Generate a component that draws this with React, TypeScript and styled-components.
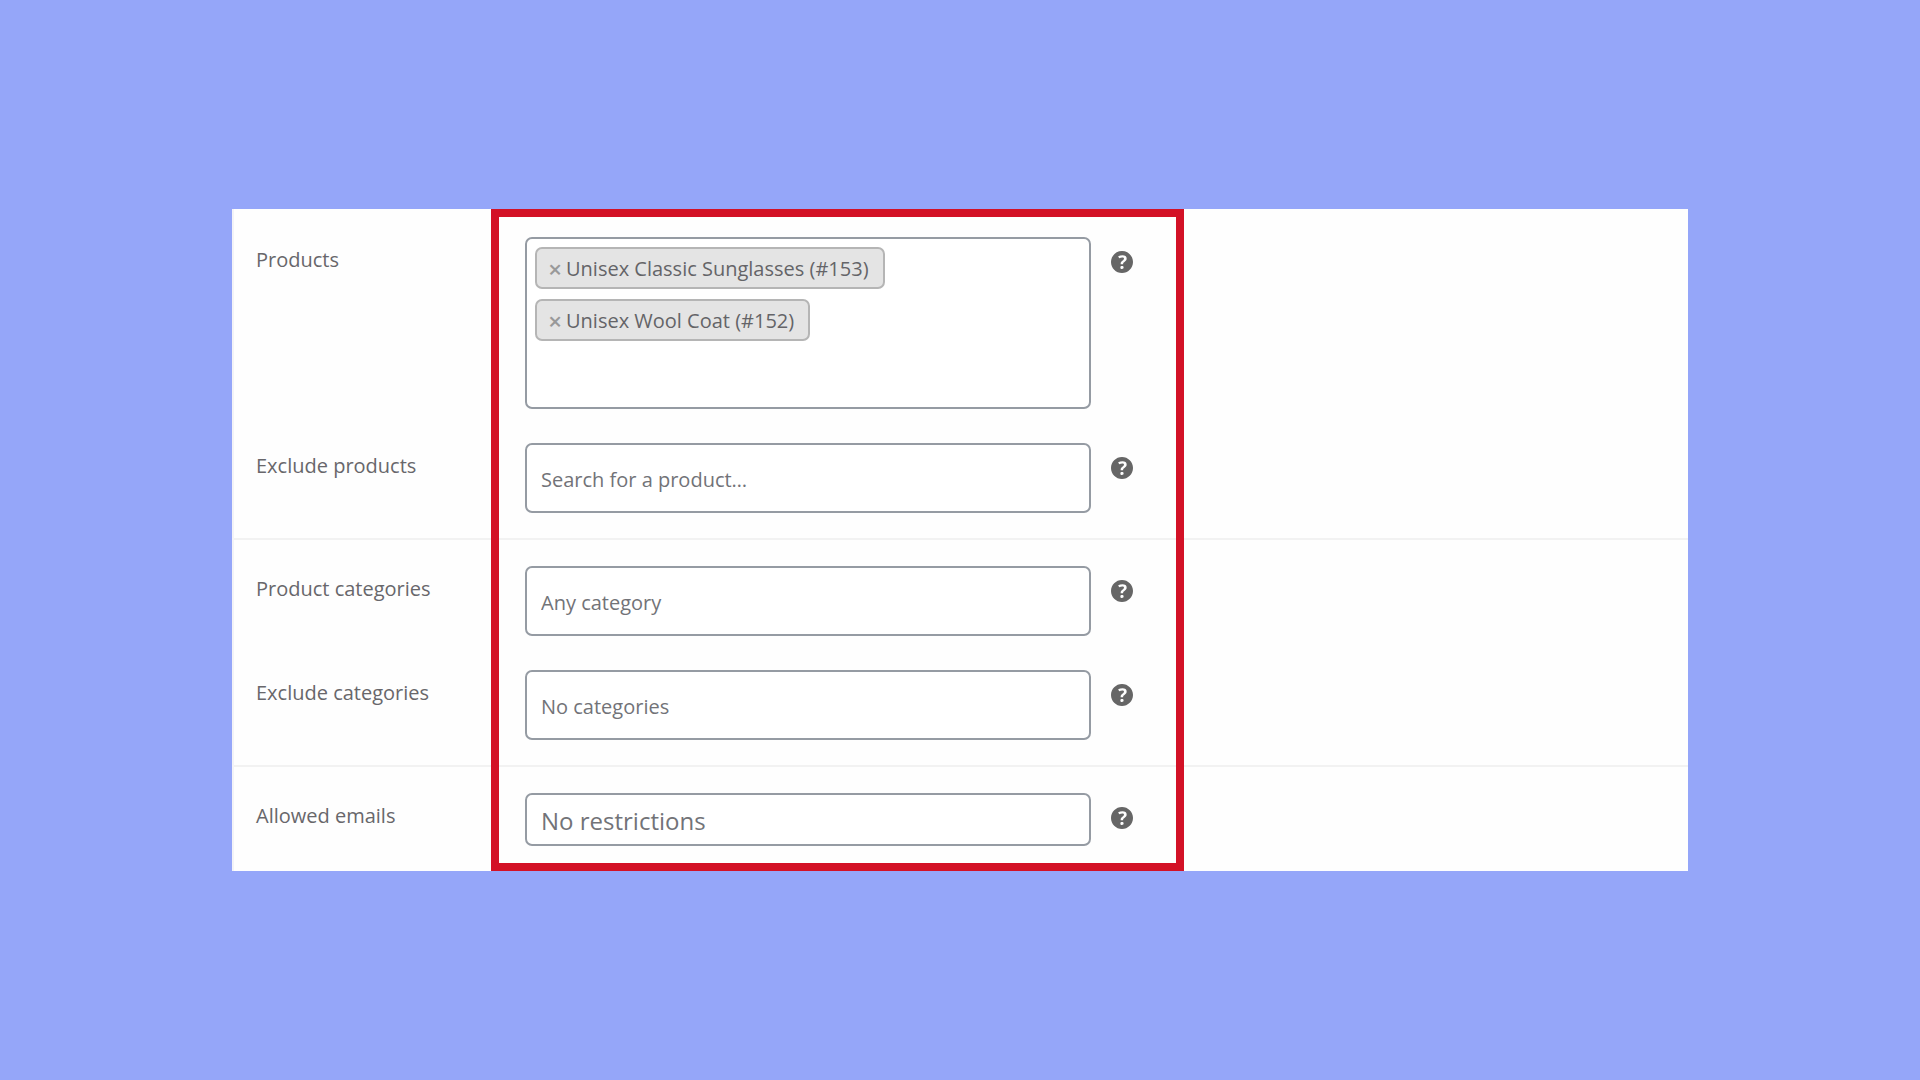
import React, { useState } from "react";
import styled, { createGlobalStyle } from "styled-components";

const GlobalStyle = createGlobalStyle`
  *, *::before, *::after { box-sizing: border-box; }
  body { margin: 0; background: #95a6f9; }
  body, button, input { font-family: "Open Sans", "Noto Sans", sans-serif; }
`;

const Page = styled.main`
  min-height: 100vh;
  padding: 24px;
  display: flex;
  align-items: center;
  justify-content: center;
`;

const Panel = styled.form`
  position: relative;
  width: 100%;
  max-width: 1456px;
  padding-top: 2px;
  background: #fefefe;
  border-left: 2px solid #f3f3f7;
`;

const Highlight = styled.div`
  position: absolute;
  top: 0;
  bottom: 0;
  left: 257px;
  width: 693px;
  border: 8px solid #d31126;
  pointer-events: none;
`;

const Group = styled.section`
  display: flex;
  flex-direction: column;
  gap: 34px;
  padding: 26px 0 25px 22px;

  & + & { border-top: 2px solid #f2f2f2; }
`;

const Row = styled.div`
  display: grid;
  grid-template-columns: 269px minmax(0, 566px) 22px;
  align-items: start;
`;

const Label = styled.label`
  padding-top: 9px;
  font-size: 20px;
  line-height: 28px;
  color: #68676b;
`;

const Field = styled.input<{ $height: number; $large?: boolean }>`
  width: 100%;
  height: ${(p) => p.$height}px;
  padding: 2px 14px 0;
  border: 2px solid #959ba3;
  border-radius: 7px;
  background: #fff;
  color: #68676b;
  font-size: ${(p) => (p.$large ? 24 : 20)}px;
  outline: none;

  &::placeholder { color: #727378; opacity: 1; }
`;

const TagBox = styled.div`
  display: flex;
  flex-direction: column;
  height: 172px;
  padding: 8px;
  border: 2px solid #959ba3;
  border-radius: 7px;
  background: #fff;
`;

const TagList = styled.ul`
  display: flex;
  flex-direction: column;
  align-items: flex-start;
  gap: 10px;
  margin: 0;
  padding: 0;
  list-style: none;
`;

const Tag = styled.li`
  display: flex;
  align-items: center;
  gap: 4px;
  height: 42px;
  padding: 1px 14px 0 11px;
  border: 2px solid #b5b5b5;
  border-radius: 7px;
  background: #e4e4e4;
  color: #646468;
  font-size: 20px;
  line-height: 28px;
`;

const RemoveButton = styled.button`
  display: flex;
  justify-content: center;
  width: 14px;
  padding: 0;
  border: 0;
  background: none;
  color: #999;
  font-size: 24px;
  font-weight: 600;
  line-height: 28px;
  cursor: pointer;
`;

const TagInput = styled.input`
  flex: 1;
  min-height: 0;
  width: 100%;
  border: 0;
  background: none;
  font-size: 20px;
  outline: none;
`;

const HelpButton = styled.button`
  display: flex;
  margin: 14px 0 0 20px;
  padding: 0;
  border: 0;
  background: none;
  color: #666;
  cursor: pointer;

  svg { width: 22px; height: 22px; flex: none; }
`;

function Help({ topic }: { topic: string }) {
  return (
    <HelpButton type="button" aria-label={`Help: ${topic}`}>
      <svg viewBox="3 3 14 14" fill="currentColor" aria-hidden="true">
        <path d="M17 10c0-3.87-3.14-7-7-7-3.87 0-7 3.13-7 7s3.13 7 7 7c3.86 0 7-3.13 7-7zm-6.3 1.48H9.14v-.43c0-.38.08-.7.24-.98s.46-.57.88-.89c.41-.29.68-.53.81-.71.14-.18.2-.39.2-.62 0-.25-.09-.44-.28-.58-.19-.13-.45-.19-.79-.19-.58 0-1.25.19-2 .57l-.64-1.28c.87-.49 1.8-.74 2.77-.74.81 0 1.45.2 1.92.58.48.39.71.91.71 1.55 0 .43-.09.8-.29 1.11-.19.32-.57.67-1.11 1.06-.38.28-.61.49-.71.63-.1.15-.15.34-.15.57v.35zm-1.47 2.74c-.18-.17-.27-.42-.27-.73 0-.33.08-.58.26-.75s.43-.25.77-.25c.32 0 .57.09.75.26s.27.42.27.74c0 .3-.09.55-.27.72-.18.18-.43.27-.75.27-.33 0-.58-.09-.76-.26z" />
      </svg>
    </HelpButton>
  );
}

type FieldRowProps = {
  id: string;
  label: string;
  placeholder: string;
  height: number;
  large?: boolean;
};

function FieldRow({ id, label, placeholder, height, large }: FieldRowProps) {
  return (
    <Row>
      <Label htmlFor={id}>{label}</Label>
      <Field id={id} placeholder={placeholder} $height={height} $large={large} />
      <Help topic={label} />
    </Row>
  );
}

export default function App() {
  const [products, setProducts] = useState([
    "Unisex Classic Sunglasses (#153)",
    "Unisex Wool Coat (#152)",
  ]);

  return (
    <>
      <GlobalStyle />
      <Page>
        <Panel>
          <Group>
            <Row>
              <Label htmlFor="products">Products</Label>
              <TagBox>
                <TagList>
                  {products.map((name) => (
                    <Tag key={name}>
                      <RemoveButton
                        type="button"
                        aria-label={`Remove ${name}`}
                        onClick={() => setProducts(products.filter((p) => p !== name))}
                      >
                        ×
                      </RemoveButton>
                      <span>{name}</span>
                    </Tag>
                  ))}
                </TagList>
                <TagInput id="products" />
              </TagBox>
              <Help topic="Products" />
            </Row>
            <FieldRow id="exclude-products" label="Exclude products" placeholder="Search for a product…" height={70} />
          </Group>
          <Group>
            <FieldRow id="categories" label="Product categories" placeholder="Any category" height={70} />
            <FieldRow id="exclude-categories" label="Exclude categories" placeholder="No categories" height={70} />
          </Group>
          <Group>
            <FieldRow id="emails" label="Allowed emails" placeholder="No restrictions" height={53} large />
          </Group>
          <Highlight />
        </Panel>
      </Page>
    </>
  );
}
